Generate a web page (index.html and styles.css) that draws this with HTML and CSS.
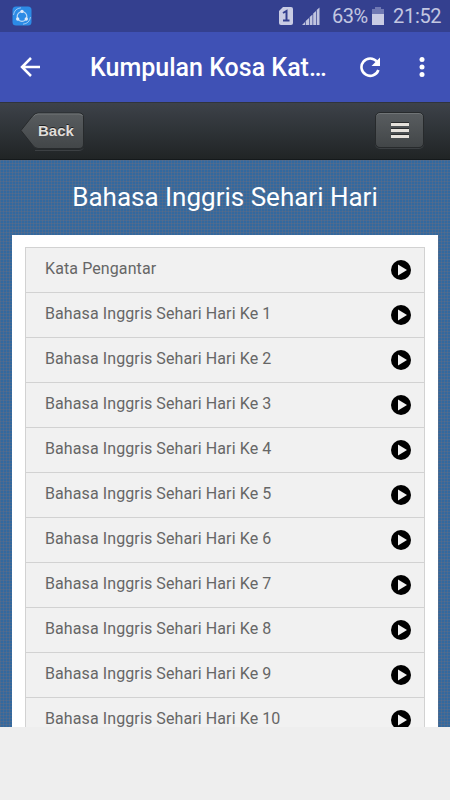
FILE: index.html
```html
<!DOCTYPE html>
<html lang="id">
<head>
    <meta charset="UTF-8">
    <meta name="viewport" content="width=device-width, initial-scale=1.0">
    <title>Kumpulan Kosa Kata</title>
    <link rel="stylesheet" href="styles.css">
</head>
<body>
    <div class="status">
        <svg class="share" width="20" height="20" viewBox="0 0 20 20">
            <rect x="0.5" y="0.5" width="19" height="19" rx="3.5" fill="#2c8be6"/>
            <g fill="none" stroke="#b9d6f5">
                <circle cx="10" cy="10.5" r="4.8" stroke-width="1.3"/>
                <path d="M1.5 9A8.5 8.5 0 0 1 9 1.8M18.5 11A8.5 8.5 0 0 1 11 18.2" stroke-width="0.8"/>
            </g>
            <g fill="#dbe8fa">
                <circle cx="10" cy="5.4" r="1.7"/>
                <circle cx="5.7" cy="13" r="1.7"/>
                <circle cx="14.3" cy="13" r="1.7"/>
            </g>
        </svg>
        <svg class="sim" width="14" height="18" viewBox="0 0 14 18">
            <path d="M4 0H12Q14 0 14 2V16Q14 18 12 18H2Q0 18 0 16V4Z" fill="#c9cce4"/>
            <path d="M4 6L7.5 4V13.5M4 13.5H10.5" fill="none" stroke="#34408f" stroke-width="2"/>
        </svg>
        <svg class="signal" width="18" height="18" viewBox="0 0 18 18">
            <path d="M0 18L3 15V18ZM3.7 18V14L7 11V18ZM7.7 18V10L10.5 7.5V18ZM11.2 18V6.5L14 4V18ZM14.7 18V3L17.5 0.5V18Z" fill="#c0c4df"/>
        </svg>
        <span class="percent">63%</span>
        <svg class="battery" width="12" height="18" viewBox="0 0 12 18">
            <path d="M3 0H9V2H12V7H0V2H3Z" fill="#7079b3"/>
            <path d="M0 7H12V18H0Z" fill="#c9cce4"/>
        </svg>
        <span class="clock">21:52</span>
    </div>
    <header class="appbar">
        <svg class="arrow" width="20" height="20" viewBox="0 0 20 20">
            <path d="M20 10H2M11 1L2 10L11 19" fill="none" stroke="#fff" stroke-width="2.5"/>
        </svg>
        <h1>Kumpulan Kosa Kat…</h1>
        <svg class="reload" width="20" height="21" viewBox="0 0 20 21">
            <path d="M16.8 4.5A8.7 8.7 0 1 0 18.4 13" fill="none" stroke="#fff" stroke-width="2.6"/>
            <path d="M20 0.5V9H11.5Z" fill="#fff"/>
        </svg>
        <svg class="dots" width="6" height="20" viewBox="0 0 6 20">
            <g fill="#fff">
                <circle cx="3" cy="2.5" r="2.5"/>
                <circle cx="3" cy="10" r="2.5"/>
                <circle cx="3" cy="17.5" r="2.5"/>
            </g>
        </svg>
    </header>
    <nav class="toolbar">
        <div class="back">
            <svg width="65" height="40" viewBox="0 0 65 40">
                <defs>
                    <linearGradient id="grey" x1="0" y1="0" x2="0" y2="1">
                        <stop offset="0" stop-color="#595d60"/>
                        <stop offset="1" stop-color="#424648"/>
                    </linearGradient>
                </defs>
                <path d="M15 38.5H59Q62 38.5 63 36.5" fill="none" stroke="#3c4043"/>
                <path d="M1 18.5L12.5 4Q15 1 18 1H59Q63.5 1 63.5 5V32Q63.5 36.5 59 36.5H18Q15 36.5 12.5 33Z" fill="url(#grey)" stroke="#272a2c"/>
                <path d="M13.5 4.5Q15.5 2 18 2H59Q62 2 62.5 4" fill="none" stroke="#707476"/>
            </svg>
            <span>Back</span>
        </div>
        <div class="menu"><i></i><i></i><i></i></div>
    </nav>
    <main class="page">
        <h2>Bahasa Inggris Sehari Hari</h2>
        <div class="box">
            <ul></ul>
        </div>
    </main>
    <script>
        const ul = document.querySelector("ul");
        const icon = `<svg width="20" height="20" viewBox="0 0 20 20"><circle cx="10" cy="10" r="10" fill="#000"/><path d="M7 4.5V15.5L16 10Z" fill="#f1f1f1"/></svg>`;
        let str = `<li><span>Kata Pengantar</span>${icon}</li>`;
        for (let i = 1 ; i <= 10 ; i++) {
            str += `<li><span>Bahasa Inggris Sehari Hari Ke ${i}</span>${icon}</li>`;
        }
        ul.innerHTML = str;
    </script>
</body>
</html>
```
FILE: styles.css
```css
* {box-sizing: border-box;}

body {
    margin: 0;
    height: 800px;
    overflow: hidden;
    background: #eee;
    font-family: Roboto, sans-serif;
}
svg {
    display: block;
    flex: none;
}

/* phone status bar */
.status {
    display: flex;
    align-items: center;
    height: 32px;
    padding: 0 9px 0 12px;
    background: #34408f;
    color: #c3c7e1;
    font-size: 20px;
    line-height: 34px;
}
.share {margin-top: -1px;}
.sim {margin-left: auto;}
.signal {margin-left: 9px;}
.percent {
    width: 37px;
    margin-left: 12px;
    letter-spacing: -0.5px;
    white-space: nowrap;
}
.battery {margin-left: 3px;}
.clock {
    width: 48px;
    margin-left: 9px;
    letter-spacing: -0.3px;
    white-space: nowrap;
}

.appbar {
    display: flex;
    align-items: center;
    height: 70px;
    padding: 0 25px 0 20px;
    background: #3f51b5;
    color: #fff;
}
.appbar h1 {
    width: 240px;
    margin: 0 0 0 50px;
    padding-top: 2px;
    font-size: 25px;
    font-weight: 500;
    line-height: 70px;
    white-space: nowrap;
}
.reload {margin-left: 30px;}
.dots {margin-left: auto;}

.toolbar {
    display: flex;
    justify-content: space-between;
    height: 58px;
    padding: 9px 26px 0 20px;
    border-top: 1px solid #30343c;
    border-bottom: 1px solid #15191b;
    background: linear-gradient(#3d4249, #202425);
}
.back {
    display: grid;
    height: 40px;
}
.back svg, .back span {grid-area: 1 / 1;}
.back span {
    padding-left: 18px;
    color: #e0deda;
    font: bold 15px/38px "Liberation Sans", sans-serif;
    text-shadow: 0 -1px #222;
}
.menu {
    display: flex;
    flex-direction: column;
    align-items: center;
    justify-content: center;
    gap: 3px;
    width: 49px;
    height: 36px;
    border: 1px solid #272a2c;
    border-radius: 5px;
    background: linear-gradient(#595d60, #424648);
    box-shadow: inset 0 1px #707476, 0 1px #3c4043;
}
.menu i {
    width: 18px;
    height: 3px;
    background: #e6e2dc;
    box-shadow: 0 -1px #2a2c2d;
}

/* woven blue background */
.page {
    height: 567px;
    padding: 0 12px;
    overflow: hidden;
    background:
        repeating-linear-gradient(90deg, rgba(120, 110, 120, 0.3) 0 1px, transparent 1px 3px),
        repeating-linear-gradient(rgba(120, 110, 120, 0.3) 0 1px, transparent 1px 3px),
        #33699f;
}
.page h2 {
    height: 75px;
    margin: 0;
    color: #fff;
    font-size: 26px;
    font-weight: 400;
    line-height: 75px;
    text-align: center;
    white-space: nowrap;
}
.box {
    padding: 12px 13px;
    background: #fff;
}
ul {
    margin: 0;
    padding: 0;
    border: 1px solid #d2d2d2;
    border-top: 0;
    background: #f1f1f1;
    list-style: none;
}
li {
    display: flex;
    justify-content: space-between;
    height: 45px;
    padding: 11px 13px 0 19px;
    border-top: 1px solid #d2d2d2;
    color: #666;
    font-size: 16px;
    letter-spacing: 0.1px;
    line-height: 19px;
}
li svg {margin-top: 1px;}
```
